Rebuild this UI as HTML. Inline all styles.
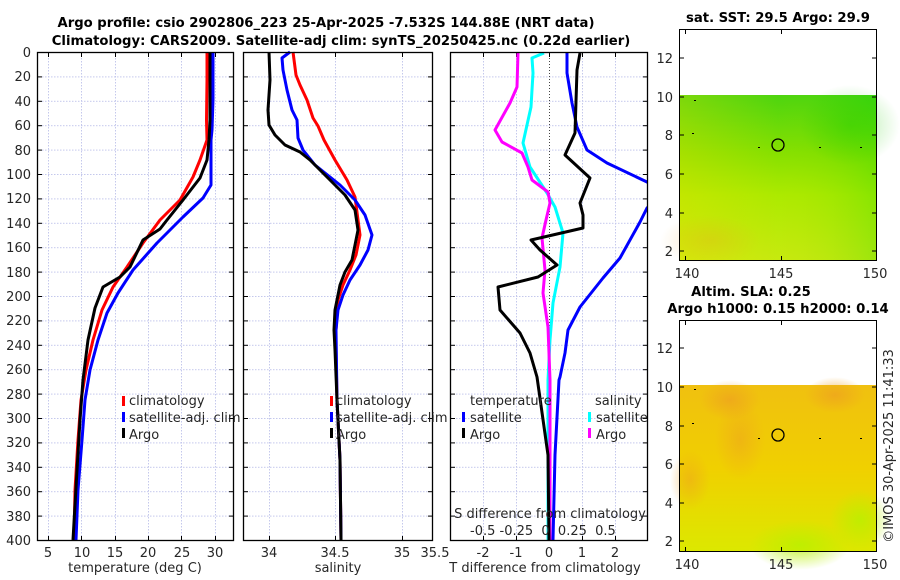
<!DOCTYPE html>
<html><head><meta charset="utf-8"><style>
html,body{margin:0;padding:0;background:#fff;}
svg{display:block;font-family:"DejaVu Sans","Liberation Sans",sans-serif;}
.t{font-size:13px;fill:#262626;}
.b{font-size:13.2px;font-weight:bold;fill:#000;}
</style></head><body>
<svg width="900" height="580" viewBox="0 0 900 580" xmlns="http://www.w3.org/2000/svg">
<defs>
<pattern id="hg" x="0" y="52" width="900" height="24.4" patternUnits="userSpaceOnUse"><line x1="0" x2="900" y1="0.5" y2="0.5" stroke="#c4c8ec" stroke-dasharray="1.5 1.5"/></pattern>
<pattern id="ht" x="0" y="52" width="900" height="24.4" patternUnits="userSpaceOnUse"><line x1="0" x2="900" y1="0.5" y2="0.5" stroke="#000"/></pattern>
<clipPath id="c3"><rect x="450" y="52" width="198" height="489"/></clipPath>
<linearGradient id="g1" x1="0" y1="0" x2="0" y2="1"><stop offset="0" stop-color="#44d410"/><stop offset="0.35" stop-color="#80e000"/><stop offset="0.6" stop-color="#a8ea00"/><stop offset="1" stop-color="#c4ea10"/></linearGradient>
<linearGradient id="g1b" x1="0" y1="0" x2="1" y2="0"><stop offset="0" stop-color="#ffe000" stop-opacity="0.3"/><stop offset="0.5" stop-color="#ffe000" stop-opacity="0.05"/><stop offset="1" stop-color="#00d000" stop-opacity="0.2"/></linearGradient>
<linearGradient id="g2" x1="0" y1="0" x2="0" y2="1"><stop offset="0" stop-color="#f0c010"/><stop offset="0.5" stop-color="#f0d000"/><stop offset="1" stop-color="#dce800"/></linearGradient>
<radialGradient id="o1"><stop offset="0" stop-color="#eea020" stop-opacity="0.7"/><stop offset="1" stop-color="#eea020" stop-opacity="0"/></radialGradient>
<radialGradient id="y1"><stop offset="0" stop-color="#b8f000" stop-opacity="0.8"/><stop offset="1" stop-color="#b8f000" stop-opacity="0"/></radialGradient>
<radialGradient id="gr"><stop offset="0" stop-color="#20cc00" stop-opacity="0.35"/><stop offset="1" stop-color="#20cc00" stop-opacity="0"/></radialGradient>
</defs>

<text class="b" x="326" y="27" text-anchor="middle">Argo profile: csio 2902806_223 25-Apr-2025 -7.532S 144.88E (NRT data)</text>
<text class="b" x="341" y="45" text-anchor="middle">Climatology: CARS2009. Satellite-adj clim: synTS_20250425.nc (0.22d earlier)</text>

<rect x="37" y="52" width="197" height="489" fill="url(#hg)"/>
<rect x="243" y="52" width="190" height="489" fill="url(#hg)"/>
<rect x="450" y="52" width="198" height="489" fill="url(#hg)"/>
<g stroke="#c4c8ec" stroke-dasharray="1.5 1.5">
<line x1="48.5" x2="48.5" y1="52" y2="541"/><line x1="81.5" x2="81.5" y1="52" y2="541"/><line x1="115.5" x2="115.5" y1="52" y2="541"/><line x1="148.5" x2="148.5" y1="52" y2="541"/><line x1="181.5" x2="181.5" y1="52" y2="541"/><line x1="215.5" x2="215.5" y1="52" y2="541"/>
<line x1="269.5" x2="269.5" y1="52" y2="541"/><line x1="335.5" x2="335.5" y1="52" y2="541"/><line x1="402.5" x2="402.5" y1="52" y2="541"/>
<line x1="483.5" x2="483.5" y1="52" y2="541"/><line x1="516.5" x2="516.5" y1="52" y2="541"/><line x1="582.5" x2="582.5" y1="52" y2="541"/><line x1="615.5" x2="615.5" y1="52" y2="541"/>
</g>
<line x1="549.5" x2="549.5" y1="52" y2="541" stroke="#444" stroke-dasharray="1 2"/>
<rect x="37" y="52" width="5" height="489" fill="url(#ht)"/><rect x="229" y="52" width="5" height="489" fill="url(#ht)"/>
<rect x="243" y="52" width="5" height="489" fill="url(#ht)"/><rect x="428" y="52" width="5" height="489" fill="url(#ht)"/>
<rect x="450" y="52" width="5" height="489" fill="url(#ht)"/><rect x="643" y="52" width="5" height="489" fill="url(#ht)"/>
<g stroke="#000">
<path d="M48.5 52v5M81.5 52v5M115.5 52v5M148.5 52v5M181.5 52v5M215.5 52v5M48.5 541v-5M81.5 541v-5M115.5 541v-5M148.5 541v-5M181.5 541v-5M215.5 541v-5"/>
<path d="M269.5 52v5M335.5 52v5M402.5 52v5M269.5 541v-5M335.5 541v-5M402.5 541v-5"/>
<path d="M483.5 52v5M516.5 52v5M549.5 52v5M582.5 52v5M615.5 52v5M483.5 541v-5M516.5 541v-5M549.5 541v-5M582.5 541v-5M615.5 541v-5"/>
</g>

<g fill="none" stroke-width="3" stroke-linejoin="round">
<polyline stroke="#ff0000" points="207,52 207,80 206.5,120 207,140 200,160 193,177 180,200 160,220 143,243 127,267 113,287 102,310 93,340 86,370 81,400 78,440 75,490 74,540"/>
<polyline stroke="#0000ff" points="213,52 213,100 212,130 211,140 211,185 203,198 183,217 157,243 133,270 118,293 107,313 98,340 90,370 85,400 82,440 78,490 76,540"/>
<polyline stroke="#000" points="210,52 210,80 210,120 209,140 207,160 200,178 183,200 167,220 160,229 143,240 130,267 120,277 103,287 95,308 88,340 83,380 80,420 77,470 73,540"/>
<polyline stroke="#ff0000" points="293,52 296,75 300,85 307,100 313,118 318,126 324,140 335,160 347,180 355,197 358,220 360,235 356,255 350,270 343,285 338,300 336,330 336,350 337,400 340,460 341,540"/>
<polyline stroke="#0000ff" points="290,52 282,58 283,70 287,90 292,110 297,120 298,138 303,150 315,165 340,185 355,200 365,215 372,235 368,250 360,265 350,280 343,295 338,310 336,330 337,400 340,460 341,540"/>
<polyline stroke="#000" points="269,52 270,80 268,110 269,125 275,135 285,145 300,152 310,160 320,170 330,180 345,195 355,210 358,230 355,245 352,260 345,272 340,285 335,310 334,330 335,350 337,400 340,460 341,540"/>
<g clip-path="url(#c3)">
<polyline stroke="#00ffff" points="544,53 532,58 533,73 531,107 523,143 530,167 547,193 555,207 563,233 560,267 553,303 550,340 548,380 548,540"/>
<polyline stroke="#ff00ff" points="518,53 517,87 510,103 495,130 502,142 522,153 528,167 532,180 548,192 550,203 546,220 542,238 545,270 543,293 548,327 550,380 550,540"/>
<polyline stroke="#0000ff" points="567,53 567,73 572,103 577,127 587,150 607,163 647,182 660,190"/>
<polyline stroke="#0000ff" points="660,195 647,208 640,222 620,258 603,278 580,307 568,330 565,353 560,377 559,380 555,455 553,540"/>
<polyline stroke="#000" points="580,53 577,70 575,133 565,155 590,178 580,203 583,215 583,228 531,240 540,250 557,265 538,277 498,287 500,310 520,333 530,353 537,377 548,455 549,540"/>
</g>
</g>

<g fill="none" stroke="#000" stroke-width="1.3">
<rect x="37.5" y="52.5" width="196" height="488"/>
<rect x="243.5" y="52.5" width="189" height="488"/>
<rect x="450.5" y="52.5" width="197" height="488"/>
</g>

<g class="t" text-anchor="end">
<text x="31" y="57">0</text><text x="31" y="81">20</text><text x="31" y="106">40</text><text x="31" y="130">60</text><text x="31" y="155">80</text><text x="31" y="179">100</text><text x="31" y="203">120</text><text x="31" y="228">140</text><text x="31" y="252">160</text><text x="31" y="277">180</text><text x="31" y="301">200</text><text x="31" y="325">220</text><text x="31" y="350">240</text><text x="31" y="374">260</text><text x="31" y="399">280</text><text x="31" y="423">300</text><text x="31" y="447">320</text><text x="31" y="472">340</text><text x="31" y="496">360</text><text x="31" y="521">380</text><text x="31" y="545">400</text>
</g>
<g class="t" text-anchor="middle">
<text x="48" y="557">5</text><text x="82" y="557">10</text><text x="115" y="557">15</text><text x="148" y="557">20</text><text x="182" y="557">25</text><text x="215" y="557">30</text>
<text x="135" y="572">temperature (deg C)</text>
<text x="269" y="557">34</text><text x="335" y="557">34.5</text><text x="402" y="557">35</text><text x="435" y="557">35.5</text>
<text x="338" y="572">salinity</text>
<text x="483" y="557">-2</text><text x="516" y="557">-1</text><text x="549" y="557">0</text><text x="582" y="557">1</text><text x="615" y="557">2</text>
<text x="545" y="572">T difference from climatology</text>
<text x="550" y="518">S difference from climatology</text>
</g>
<g class="t">
<text x="470" y="535" xml:space="preserve">-0.5 -0.25  0  0.25  0.5</text>
</g>

<g stroke-width="3">
<line x1="123.5" x2="123.5" y1="396" y2="406" stroke="#f00"/><line x1="123.5" x2="123.5" y1="412" y2="422" stroke="#00f"/><line x1="123.5" x2="123.5" y1="428" y2="438" stroke="#000"/>
<line x1="331.5" x2="331.5" y1="396" y2="406" stroke="#f00"/><line x1="331.5" x2="331.5" y1="412" y2="422" stroke="#00f"/><line x1="331.5" x2="331.5" y1="428" y2="438" stroke="#000"/>
<line x1="463.5" x2="463.5" y1="412" y2="422" stroke="#00f"/><line x1="463.5" x2="463.5" y1="428" y2="438" stroke="#000"/>
<line x1="589.5" x2="589.5" y1="412" y2="422" stroke="#0ff"/><line x1="589.5" x2="589.5" y1="428" y2="438" stroke="#f0f"/>
</g>
<g class="t">
<text x="129" y="405">climatology</text><text x="129" y="422">satellite-adj. clim</text><text x="129" y="439">Argo</text>
<text x="336" y="405">climatology</text><text x="336" y="422">satellite-adj. clim</text><text x="336" y="439">Argo</text>
<text x="470" y="405">temperature</text><text x="470" y="422">satellite</text><text x="470" y="439">Argo</text>
<text x="595" y="405">salinity</text><text x="596" y="422">satellite</text><text x="596" y="439">Argo</text>
</g>

<text class="b" x="778" y="22" text-anchor="middle">sat. SST: 29.5 Argo: 29.9</text>
<rect x="679" y="95" width="198" height="166" fill="url(#g1)"/>
<rect x="679" y="95" width="198" height="166" fill="url(#g1b)"/>
<ellipse cx="710" cy="240" rx="50" ry="25" fill="url(#o1)" opacity="0.35"/>
<ellipse cx="850" cy="125" rx="50" ry="40" fill="url(#gr)"/>
<rect x="679.5" y="29.5" width="197" height="231" fill="none" stroke="#000"/>
<circle cx="778" cy="145" r="6" fill="none" stroke="#000" stroke-width="1.3"/>
<g fill="#000"><rect x="694" y="100" width="2" height="1"/><rect x="692" y="133" width="2" height="1"/><rect x="758" y="147" width="2" height="1"/><rect x="819" y="147" width="2" height="1"/><rect x="860" y="147" width="2" height="1"/></g>
<g stroke="#000"><path d="M679 58h5M679 97h5M679 135h5M679 174h5M679 213h5M679 251h5M877 58h-5M877 97h-5M877 135h-5M877 174h-5M877 213h-5M877 251h-5M685.5 261v-5M781.5 261v-5M685.5 29v5M781.5 29v5"/></g>
<g class="t" text-anchor="end"><text x="673" y="63">12</text><text x="673" y="102">10</text><text x="673" y="140">8</text><text x="673" y="179">6</text><text x="673" y="218">4</text><text x="673" y="256">2</text></g>
<g class="t" text-anchor="middle"><text x="687" y="278">140</text><text x="781" y="278">145</text><text x="875" y="278">150</text></g>

<text class="b" x="751" y="296" text-anchor="middle">Altim. SLA: 0.25</text>
<text class="b" x="778" y="313" text-anchor="middle">Argo h1000: 0.15 h2000: 0.14</text>
<rect x="679" y="385" width="198" height="167" fill="url(#g2)"/>
<ellipse cx="730" cy="400" rx="30" ry="20" fill="url(#o1)"/>
<ellipse cx="835" cy="395" rx="30" ry="18" fill="url(#o1)"/>
<ellipse cx="740" cy="440" rx="25" ry="40" fill="url(#o1)" opacity="0.7"/>
<ellipse cx="690" cy="480" rx="20" ry="30" fill="url(#o1)" opacity="0.7"/>
<ellipse cx="800" cy="545" rx="50" ry="25" fill="url(#y1)"/>
<ellipse cx="860" cy="520" rx="30" ry="30" fill="url(#y1)"/>
<rect x="679.5" y="320.5" width="197" height="231" fill="none" stroke="#000"/>
<circle cx="778" cy="435" r="6" fill="none" stroke="#000" stroke-width="1.3"/>
<g fill="#000"><rect x="694" y="389" width="2" height="1"/><rect x="692" y="423" width="2" height="1"/><rect x="758" y="438" width="2" height="1"/><rect x="819" y="438" width="2" height="1"/><rect x="860" y="438" width="2" height="1"/></g>
<g stroke="#000"><path d="M679 348h5M679 387h5M679 426h5M679 464h5M679 503h5M679 541h5M877 348h-5M877 387h-5M877 426h-5M877 464h-5M877 503h-5M877 541h-5M685.5 552v-5M781.5 552v-5M685.5 320v5M781.5 320v5"/></g>
<g class="t" text-anchor="end"><text x="673" y="353">12</text><text x="673" y="392">10</text><text x="673" y="431">8</text><text x="673" y="469">6</text><text x="673" y="508">4</text><text x="673" y="546">2</text></g>
<g class="t" text-anchor="middle"><text x="687" y="569">140</text><text x="781" y="569">145</text><text x="875" y="569">150</text></g>

<text class="t" x="0" y="0" transform="translate(893,446) rotate(-90)" text-anchor="middle">©IMOS 30-Apr-2025 11:41:33</text>
</svg>
</body></html>
